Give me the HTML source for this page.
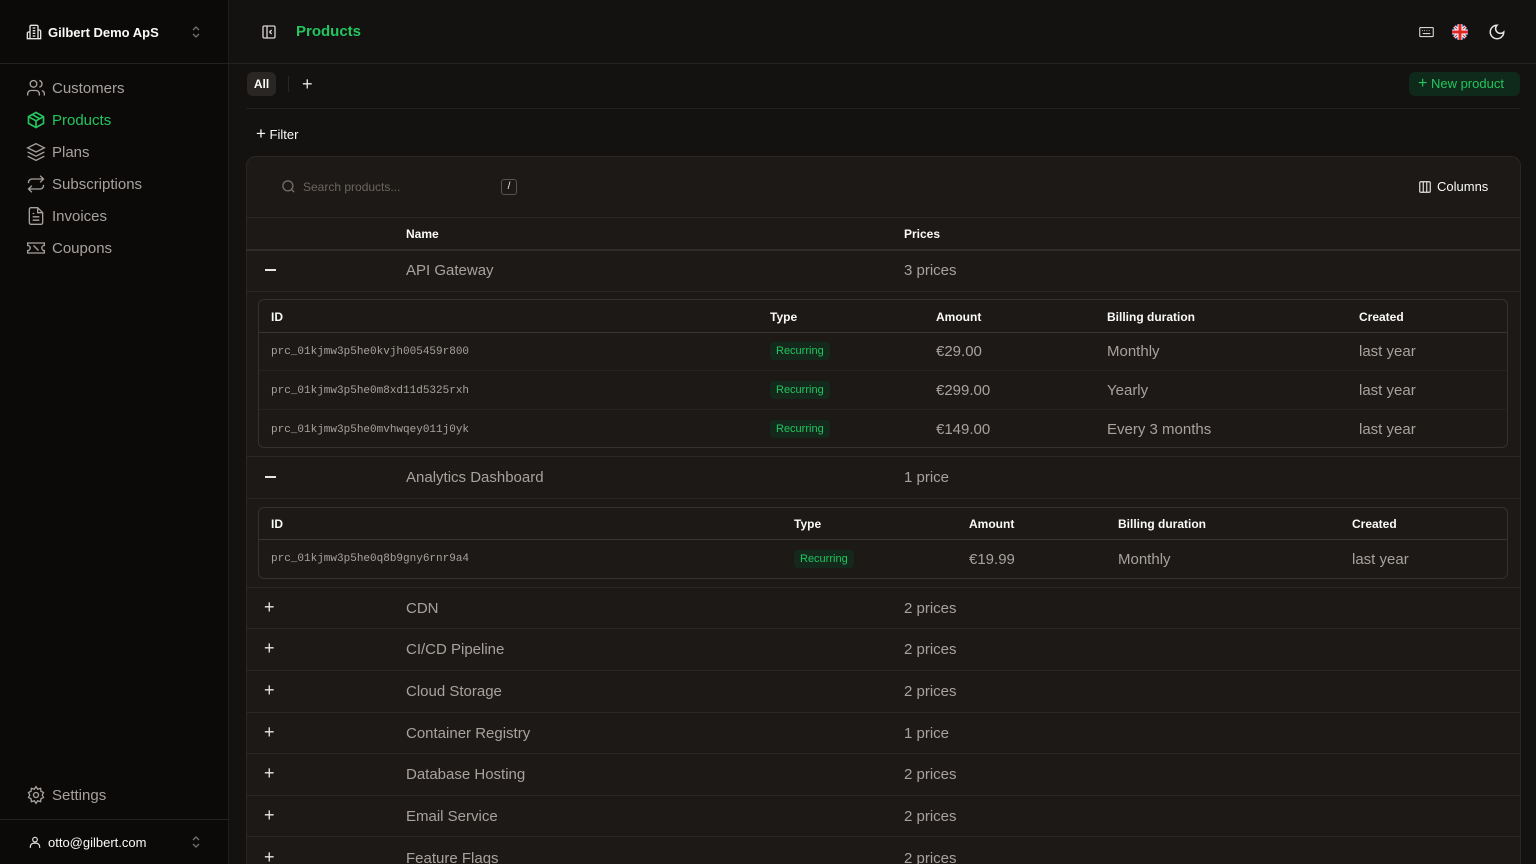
<!DOCTYPE html>
<html style="overflow:hidden;height:864px"><head><meta charset="utf-8"><style>
*{box-sizing:border-box;margin:0;padding:0}
body{width:1536px;height:864px;overflow:hidden;background:#141211;font-family:"Liberation Sans",sans-serif;color:#e7e5e4;position:relative}
.a{position:absolute}
.side{left:0;top:0;width:229px;height:864px;background:#0b0a09;border-right:1px solid #1f1d1b}
.hl{height:1px;background:#26231f}
.nav{left:26px;font-size:15px;color:#a8a29e;display:flex;align-items:center;gap:6px}
.nav svg{width:20px;height:20px}
.mono{font-family:"Liberation Mono",monospace;font-size:11px;color:#a8a29e}
.th{font-size:12px;font-weight:bold;color:#fafaf9}
.td{font-size:15px;color:#a8a29e}
.badge{background:#14291c;color:#22c55e;font-size:11px;padding:3px 6px;border-radius:4px}
.row{left:246px;width:1274px;height:42px;border-top:1px solid #2a2623}
.plus{position:absolute;left:18px;top:11px;font-size:18px;color:#e7e5e4}
.minus{position:absolute;left:265px;width:11px;height:1.5px;background:#e7e5e4}
</style></head><body>
<div class="a side"></div>
<div class="a hl" style="left:0;top:63px;width:1536px"></div>
<div class="a hl" style="left:0;top:819px;width:229px"></div>
<div class="a" style="left:26px;top:24px;display:flex;align-items:center;gap:6px;font-size:13px;font-weight:bold;color:#fafaf9">
<svg width="16" height="16" viewBox="0 0 24 24" fill="none" stroke="#e7e5e4" stroke-width="2"><path d="M6 22V4a2 2 0 0 1 2-2h8a2 2 0 0 1 2 2v18zM6 12H4a2 2 0 0 0-2 2v8h4M18 9h2a2 2 0 0 1 2 2v11h-4M10 6h4M10 10h4M10 14h4M10 18h4"/></svg>Gilbert Demo ApS</div>
<svg class="a" style="left:190px;top:25px" width="12" height="14" viewBox="0 0 12 14" fill="none" stroke="#78716c" stroke-width="1.3"><path d="M3 5l3-3 3 3M3 9l3 3 3-3"/></svg>
<div class="a nav" style="top:78px"><svg viewBox="0 0 24 24" fill="none" stroke="#a8a29e" stroke-width="1.6"><circle cx="9" cy="7" r="4"/><path d="M2 21v-2a4 4 0 0 1 4-4h6a4 4 0 0 1 4 4v2M16 3.1a4 4 0 0 1 0 7.8M22 21v-2a4 4 0 0 0-3-3.9"/></svg>Customers</div>
<div class="a nav" style="top:110px;color:#22c55e"><svg viewBox="0 0 24 24" fill="none" stroke="#22c55e" stroke-width="2"><path d="M21 8l-9-5-9 5v8l9 5 9-5zM3 8l9 5 9-5M12 13v8M7.5 5.5l9 5"/></svg>Products</div>
<div class="a nav" style="top:142px"><svg viewBox="0 0 24 24" fill="none" stroke="#a8a29e" stroke-width="1.6"><path d="M12 2l10 5-10 5L2 7zM2 12l10 5 10-5M2 17l10 5 10-5"/></svg>Plans</div>
<div class="a nav" style="top:174px"><svg viewBox="0 0 24 24" fill="none" stroke="#a8a29e" stroke-width="1.6"><path d="M17 2l4 4-4 4M3 11V10a4 4 0 0 1 4-4h14M7 22l-4-4 4-4M21 13v1a4 4 0 0 1-4 4H3"/></svg>Subscriptions</div>
<div class="a nav" style="top:206px"><svg viewBox="0 0 24 24" fill="none" stroke="#a8a29e" stroke-width="1.6"><path d="M14 2H6a2 2 0 0 0-2 2v16a2 2 0 0 0 2 2h12a2 2 0 0 0 2-2V8zM14 2v6h6M8 13h8M8 17h8M8 9h2"/></svg>Invoices</div>
<div class="a nav" style="top:238px"><svg viewBox="0 0 24 24" fill="none" stroke="#a8a29e" stroke-width="1.6"><path d="M2 9a3 3 0 0 1 0 6v3h20v-3a3 3 0 0 1 0-6V6H2zM9 9l6 6M9 9h.01M15 15h.01"/></svg>Coupons</div>
<div class="a nav" style="top:785px"><svg viewBox="0 0 24 24" fill="none" stroke="#a8a29e" stroke-width="1.6"><circle cx="12" cy="12" r="3"/><path d="M12 2l2 3 3.5-1 .5 3.5L21 9l-1.5 3 1.5 3-3 1.5-.5 3.5-3.5-1-2 3-2-3-3.5 1-.5-3.5L3 15l1.5-3L3 9l3-1.5.5-3.5 3.5 1z"/></svg>Settings</div>
<div class="a" style="left:28px;top:834px;display:flex;align-items:center;gap:6px;font-size:13px;color:#fafaf9"><svg width="14" height="16" viewBox="0 0 24 24" fill="none" stroke="#e7e5e4" stroke-width="2"><circle cx="12" cy="8" r="4"/><path d="M4 22v-2a6 6 0 0 1 6-6h4a6 6 0 0 1 6 6v2"/></svg>otto@gilbert.com</div>
<svg class="a" style="left:190px;top:835px" width="12" height="14" viewBox="0 0 12 14" fill="none" stroke="#78716c" stroke-width="1.3"><path d="M3 5l3-3 3 3M3 9l3 3 3-3"/></svg>

<svg class="a" style="left:261px;top:24px" width="16" height="16" viewBox="0 0 24 24" fill="none" stroke="#d6d3d1" stroke-width="2"><rect x="3" y="3" width="18" height="18" rx="2"/><path d="M9 3v18M16 15l-3-3 3-3"/></svg>
<div class="a" style="left:296px;top:23px;font-size:15px;font-weight:bold;color:#22c55e">Products</div>
<svg class="a" style="left:1419px;top:26px" width="15" height="12" viewBox="0 0 20 14" fill="none" stroke="#d6d3d1" stroke-width="1.5"><rect x="1" y="1" width="18" height="12" rx="1"/><path d="M4 5h1M7 5h1M10 5h1M13 5h1M16 5h0M5 9h10"/></svg>
<svg class="a" style="left:1452px;top:24px" width="16" height="16" viewBox="0 0 16 16"><clipPath id="c"><circle cx="8" cy="8" r="8"/></clipPath><g clip-path="url(#c)"><rect width="16" height="16" fill="#1e3a8a"/><path d="M0 0L16 16M16 0L0 16" stroke="#fff" stroke-width="3"/><path d="M0 0L16 16M16 0L0 16" stroke="#dc2626" stroke-width="1"/><path d="M8 0v16M0 8h16" stroke="#fff" stroke-width="5"/><path d="M8 0v16M0 8h16" stroke="#dc2626" stroke-width="3"/></g></svg>
<svg class="a" style="left:1488px;top:23px" width="18" height="18" viewBox="0 0 24 24" fill="none" stroke="#e7e5e4" stroke-width="2"><path d="M12 3a6 6 0 0 0 9 9 9 9 0 1 1-9-9z"/></svg>

<div class="a" style="left:247px;top:72px;width:29px;height:24px;background:#2a2624;border-radius:6px;font-size:12px;font-weight:bold;color:#fafaf9;text-align:center;line-height:24px">All</div>
<div class="a" style="left:288px;top:76px;width:1px;height:16px;background:#2a2624"></div>
<div class="a" style="left:302px;top:74px;font-size:18px;color:#e7e5e4">+</div>
<div class="a" style="left:1409px;top:72px;width:111px;height:24px;background:#0f2a1a;border-radius:6px;color:#22c55e;font-size:13px;line-height:24px;padding-left:9px"><span style="font-size:16px">+</span> New product</div>
<div class="a hl" style="left:246px;top:108px;width:1274px;background:#221f1d"></div>
<div class="a" style="left:256px;top:124px;font-size:13px;color:#fafaf9"><span style="font-size:17px">+</span> Filter</div>

<div class="a" style="left:246px;top:156px;width:1275px;height:720px;background:#1c1917;border:1px solid #2a2623;border-radius:10px;border-bottom:none"></div>
<svg class="a" style="left:281px;top:179px" width="15" height="15" viewBox="0 0 24 24" fill="none" stroke="#78716c" stroke-width="2"><circle cx="11" cy="11" r="8"/><path d="M21 21l-4.3-4.3"/></svg>
<div class="a" style="left:303px;top:180px;font-size:12px;color:#6b6560">Search products...</div>
<div class="a" style="left:501px;top:179px;width:16px;height:16px;border:1px solid #57534e;border-radius:3px;font-size:10px;text-align:center;line-height:14px;color:#fafaf9">/</div>
<svg class="a" style="left:1418px;top:180px" width="14" height="14" viewBox="0 0 24 24" fill="none" stroke="#e7e5e4" stroke-width="2"><rect x="3" y="3" width="18" height="18" rx="2"/><path d="M9 3v18M15 3v18"/></svg>
<div class="a" style="left:1437px;top:179px;font-size:13px;color:#fafaf9">Columns</div>
<div class="a hl" style="left:246px;top:217px;width:1274px;background:#2a2623"></div>
<div class="a th" style="left:406px;top:227px">Name</div>
<div class="a th" style="left:904px;top:227px">Prices</div>
<div class="a" style="left:246px;top:249px;width:1274px;height:2px;background:#2f2b28"></div>

<div class="minus" style="top:269px"></div>
<div class="a td" style="left:406px;top:262px">API Gateway</div><div class="a td" style="left:904px;top:262px">3 prices</div>
<div class="a" style="left:246px;top:291px;width:1274px;height:1px;background:#2a2623"></div>
<div class="a" style="left:258px;top:299px;width:1250px;height:149px;border:1px solid #35312d;border-radius:6px"></div>
<div class="a th" style="left:271px;top:310px">ID</div><div class="a th" style="left:770px;top:310px">Type</div><div class="a th" style="left:936px;top:310px">Amount</div><div class="a th" style="left:1107px;top:310px">Billing duration</div><div class="a th" style="left:1359px;top:310px">Created</div>
<div class="a" style="left:259px;top:332px;width:1248px;height:1px;background:#3a3632"></div>
<div class="a" style="left:259px;top:370px;width:1248px;height:1px;background:#272320"></div>
<div class="a" style="left:259px;top:409px;width:1248px;height:1px;background:#272320"></div>
<div class="a mono" style="left:271px;top:346px">prc_01kjmw3p5he0kvjh005459r800</div><div class="a badge" style="left:770px;top:342px">Recurring</div><div class="a td" style="left:936px;top:343px">€29.00</div><div class="a td" style="left:1107px;top:343px">Monthly</div><div class="a td" style="left:1359px;top:343px">last year</div>
<div class="a mono" style="left:271px;top:385px">prc_01kjmw3p5he0m8xd11d5325rxh</div><div class="a badge" style="left:770px;top:381px">Recurring</div><div class="a td" style="left:936px;top:382px">€299.00</div><div class="a td" style="left:1107px;top:382px">Yearly</div><div class="a td" style="left:1359px;top:382px">last year</div>
<div class="a mono" style="left:271px;top:424px">prc_01kjmw3p5he0mvhwqey011j0yk</div><div class="a badge" style="left:770px;top:420px">Recurring</div><div class="a td" style="left:936px;top:421px">€149.00</div><div class="a td" style="left:1107px;top:421px">Every 3 months</div><div class="a td" style="left:1359px;top:421px">last year</div>

<div class="a" style="left:246px;top:456px;width:1274px;height:1px;background:#2a2623"></div>
<div class="minus" style="top:476px"></div>
<div class="a td" style="left:406px;top:469px">Analytics Dashboard</div><div class="a td" style="left:904px;top:469px">1 price</div>
<div class="a" style="left:246px;top:498px;width:1274px;height:1px;background:#2a2623"></div>
<div class="a" style="left:258px;top:507px;width:1250px;height:72px;border:1px solid #35312d;border-radius:6px"></div>
<div class="a th" style="left:271px;top:517px">ID</div><div class="a th" style="left:794px;top:517px">Type</div><div class="a th" style="left:969px;top:517px">Amount</div><div class="a th" style="left:1118px;top:517px">Billing duration</div><div class="a th" style="left:1352px;top:517px">Created</div>
<div class="a" style="left:259px;top:539px;width:1248px;height:1px;background:#3a3632"></div>
<div class="a mono" style="left:271px;top:553px">prc_01kjmw3p5he0q8b9gny6rnr9a4</div><div class="a badge" style="left:794px;top:550px">Recurring</div><div class="a td" style="left:969px;top:551px">€19.99</div><div class="a td" style="left:1118px;top:551px">Monthly</div><div class="a td" style="left:1352px;top:551px">last year</div>

<div class="a row" style="top:587px"><span class="plus" style="top:9px">+</span><span class="a td" style="left:160px;top:12px">CDN</span><span class="a td" style="left:658px;top:12px">2 prices</span></div>
<div class="a row" style="top:628px"><span class="plus" style="top:9px">+</span><span class="a td" style="left:160px;top:12px">CI/CD Pipeline</span><span class="a td" style="left:658px;top:12px">2 prices</span></div>
<div class="a row" style="top:670px"><span class="plus" style="top:9px">+</span><span class="a td" style="left:160px;top:12px">Cloud Storage</span><span class="a td" style="left:658px;top:12px">2 prices</span></div>
<div class="a row" style="top:712px"><span class="plus" style="top:9px">+</span><span class="a td" style="left:160px;top:12px">Container Registry</span><span class="a td" style="left:658px;top:12px">1 price</span></div>
<div class="a row" style="top:753px"><span class="plus" style="top:9px">+</span><span class="a td" style="left:160px;top:12px">Database Hosting</span><span class="a td" style="left:658px;top:12px">2 prices</span></div>
<div class="a row" style="top:795px"><span class="plus" style="top:9px">+</span><span class="a td" style="left:160px;top:12px">Email Service</span><span class="a td" style="left:658px;top:12px">2 prices</span></div>
<div class="a row" style="top:836px"><span class="plus" style="top:10px">+</span><span class="a td" style="left:160px;top:13px">Feature Flags</span><span class="a td" style="left:658px;top:13px">2 prices</span></div>
</body></html>
